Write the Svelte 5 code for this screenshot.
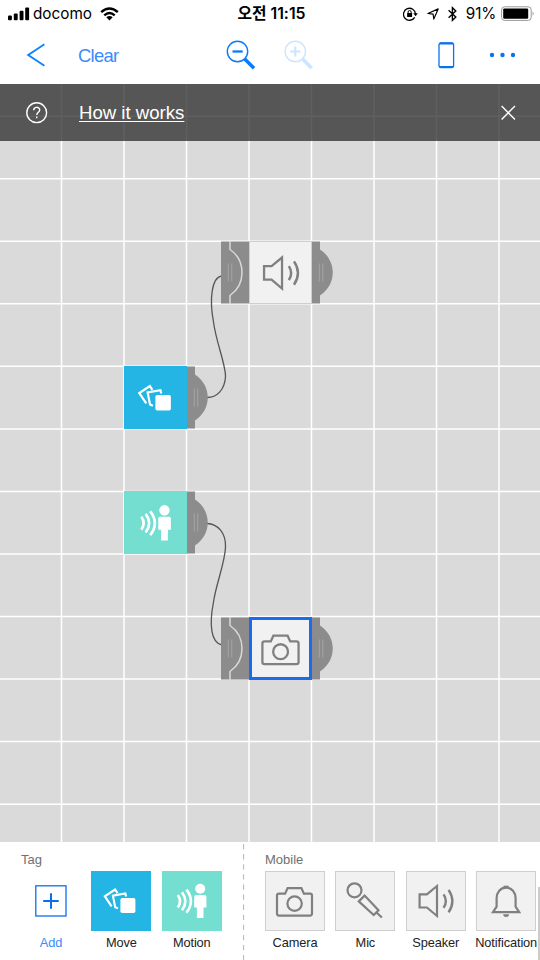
<script>
  const columns = [61.5, 124, 186.5, 249, 311.5, 374, 436.5, 499];
  const rows = [32.2, 94.8, 157.3, 219.8, 282.3, 344.9, 407.4, 470, 532.5, 595.1, 657.6, 720.2];

  const nodes = [
    { icon: 'speaker', kind: 'mobile', x: 221, y: 157, input: true },
    { icon: 'move', kind: 'move', x: 124, y: 282, input: false },
    { icon: 'motion', kind: 'motion', x: 124, y: 407, input: false },
    { icon: 'camera', kind: 'mobile selected', x: 221, y: 533, input: true }
  ];

  const tags = [
    { icon: 'move', kind: 'move', label: 'Move' },
    { icon: 'motion', kind: 'motion', label: 'Motion' }
  ];

  const mobile = [
    { icon: 'camera', label: 'Camera' },
    { icon: 'mic', label: 'Mic' },
    { icon: 'speaker', label: 'Speaker' },
    { icon: 'bell', label: 'Notification' }
  ];
</script>

{#snippet glyph(name)}
  <svg class="glyph" viewBox="0 0 60 60" fill="none" stroke="#808080" stroke-width="2.2">
    {#if name === 'speaker'}
      <path d="M13.6 23.3h7.3L31 15v30L20.9 36.5h-7.3z" />
      <path d="M37.6 23.3q4.5 6.8 0 13.6M42.6 18.8q7.6 11.3 0 22.6" stroke-width="2.4" />
    {:else if name === 'camera'}
      <path d="M14.3 22.6h6.1l2.5-5.5h13.8l2.5 5.5h6.1a2 2 0 0 1 2 2v18a2 2 0 0 1-2 2h-31a2 2 0 0 1-2-2v-18a2 2 0 0 1 2-2z" transform="translate(-.3 0)" />
      <circle cx="29.6" cy="32.6" r="7.2" />
    {:else if name === 'mic'}
      <circle cx="19.5" cy="19.3" r="7" />
      <path d="M23.8 30.4l5.8-5.8 13.9 14.6-4.8 4.8zM41.5 41.5l5.4 5" />
    {:else if name === 'bell'}
      <path d="M17 41.2h26.2l-3.6-5.5v-8.4c0-6-3.8-10.7-9.5-10.7s-9.5 4.7-9.5 10.7v8.4z" />
      <path d="M27.5 15.8h5.2" />
      <path d="M27.2 43.3h5.8a2.9 2.6 0 0 1-5.8 0z" fill="#808080" stroke="none" />
    {:else if name === 'move'}
      <path d="M20.6 35.3l-6.8-10 10.3-6.8 2.4 3.6M27 37.4l-2.8-1.2-2.3-11.6 12.4-2.2.8 3.2" stroke="#fff" stroke-width="2.1" />
      <rect x="29.4" y="27" width="15" height="15" rx="1.8" fill="#fff" stroke="none" />
    {:else if name === 'motion'}
      <path d="M15.8 24q4.6 6.2 0 12.4M20 21.2q6.8 9 0 18M24.4 18.6q9 11.6 0 23.2" stroke="#fff" stroke-width="2.6" />
      <g fill="#fff" stroke="none">
        <circle cx="38.2" cy="17.7" r="5" />
        <path d="M34 24h8.7q1.7 0 1.7 1.7v10.8h-2.9V47h-6.6V36.5h-2.7V25.7q0-1.7 1.8-1.7z" />
      </g>
    {/if}
  </svg>
{/snippet}

<div class="screen">
  <header class="status">
    <div class="carrier">
      <svg width="22" height="14" viewBox="0 0 22 14">
        <rect x="0" y="8.6" width="3.9" height="4.6" rx="1" /><rect x="5.8" y="6.6" width="3.9" height="6.6" rx="1" />
        <rect x="11.6" y="3.7" width="3.9" height="9.5" rx="1" /><rect x="17.2" y="0.4" width="3.9" height="12.8" rx="1" />
      </svg>
      <span>docomo</span>
      <svg class="wifi" width="19" height="14" viewBox="0 0 19 14" fill="none" stroke="#000" stroke-width="2.4">
        <path d="M1.2 5.2q8.3-7.6 16.6 0M4.3 8.4q5.2-4.8 10.4 0" />
        <path d="M6.3 10.3q3.2-2.8 6.4 0L9.5 13.5z" fill="#000" stroke="none" />
      </svg>
    </div>
    <div class="time">오전 11:15</div>
    <div class="indicators">
      <svg width="15" height="14" viewBox="0 0 15 14" fill="none" stroke="#000" stroke-width="1.3">
        <path d="M11.7 10.3A6 6 0 1 1 12.5 7" /><path d="M10.3 6.3h4.5l-2.2 3z" fill="#000" stroke="none" />
        <rect x="4.1" y="6" width="5" height="4" rx=".5" fill="#000" stroke="none" /><path d="M5.1 6V5a1.5 1.5 0 0 1 3 0v1" stroke-width="1" />
      </svg>
      <svg class="location" width="12" height="12" viewBox="0 0 12 12" fill="none" stroke="#000" stroke-width="1.15" stroke-linejoin="round">
        <path d="M11.2.9L6.8 11.1 6.1 6.1.9 5.5z" />
      </svg>
      <svg class="bluetooth" width="9" height="16" viewBox="0 0 9 16" fill="none" stroke="#000" stroke-width="1.4">
        <path d="M.6 4.2l7.2 6.9-3.4 3.2V1.7l3.4 3.2-7.2 6.9" />
      </svg>
      <span>91%</span>
      <svg class="battery" width="34" height="16" viewBox="0 0 34 16">
        <rect x=".6" y=".8" width="29.6" height="13.6" rx="3" fill="#fff" stroke="#999" />
        <rect x="2.2" y="2.4" width="25" height="10.4" rx="1.2" />
        <path d="M31.6 5.5q2.2 2.1 0 4.2z" fill="#999" />
      </svg>
    </div>
  </header>

  <nav class="toolbar">
    <svg class="back" width="20" height="24" viewBox="0 0 20 24" fill="none" stroke="#0a84ff" stroke-width="1.9"><path d="M18.4 1.2L2.2 12l16.2 10.8" /></svg>
    <button class="clear">Clear</button>
    <svg class="zoom-out" width="30" height="30" viewBox="0 0 30 30" fill="none" stroke="#0a7cf8">
      <circle cx="11.5" cy="11.5" r="10.2" stroke-width="1.4" />
      <path d="M6.5 11.5h10.2" stroke-width="2.3" /><path d="M18.5 18.8l9.5 9.4" stroke-width="3.6" />
    </svg>
    <svg class="zoom-in" width="30" height="30" viewBox="0 0 30 30" fill="none" stroke="#cee5fe">
      <circle cx="11.3" cy="11.5" r="10.2" stroke-width="1.4" />
      <path d="M6.2 11.5h10.2M11.3 6.4v10.2" stroke-width="2.2" /><path d="M18.3 18.8l9.5 9.4" stroke-width="3.6" />
    </svg>
    <svg class="phone" width="17" height="27" viewBox="0 0 17 27" fill="none" stroke="#0a72f0">
      <rect x="1" y="1" width="14.6" height="24.6" rx="2" stroke-width="1.3" /><path d="M1.5 1.5h13.6M1.5 25h13.6" stroke-width="2" />
    </svg>
    <svg class="more" width="27" height="6" viewBox="0 0 27 6" fill="#0a72f0">
      <circle cx="3" cy="3" r="2.2" /><circle cx="13.5" cy="3" r="2.2" /><circle cx="24" cy="3" r="2.2" />
    </svg>
  </nav>

  <main class="canvas">
    <svg class="grid" width="540" height="758" viewBox="0 0 540 758" fill="none">
      <g stroke="#fff" stroke-width="1.5">
        {#each columns as x}<path d="M{x} 0V758" />{/each}
        {#each rows as y}<path d="M0 {y}H540" />{/each}
      </g>
      <g stroke="#555" stroke-width="1.3">
        <path d="M222 192C212 193 209 214 213.5 238C216 258 226 281 225.5 293C224.5 306 217 313.5 207 313.5" />
        <path d="M207 439.5C218 440 226 449 225.5 463C225 479 216 500 213.5 518C209 541 211 559 222 561" />
      </g>
    </svg>

    {#each nodes as node}
      <div class="node" style="left: {node.x}px; top: {node.y}px">
        {#if node.input}
          <svg width="28" height="63" viewBox="0 0 28 63">
            <path d="M0 .5h28v62H0z" fill="#8c8c8c" />
            <path d="M9 0v8.5c16 11 16 35 0 46V63" fill="none" stroke="#d9d9d9" stroke-width="1.5" />
            <path d="M7.3 22.5v18M10.8 22.5v18" stroke="#a5a5a5" />
          </svg>
        {/if}
        <div class="face {node.kind}">{@render glyph(node.icon)}</div>
        <svg width="21" height="63" viewBox="0 0 21 63">
          <path d="M0 .5h8v8c17 11 17 35 0 46v8H0z" fill="#8c8c8c" />
          <path d="M7.3 22.5v18M10.8 22.5v18" stroke="#a5a5a5" />
        </svg>
      </div>
    {/each}

    <div class="banner">
      <svg width="22" height="22" viewBox="0 0 22 22" fill="none" stroke="#fff" stroke-width="1.4">
        <circle cx="10.7" cy="10.7" r="9.9" />
        <path d="M7.7 8.3c0-4 6-3.8 6-.4 0 2.3-3 2.6-3 5.2M10.7 14.4v1.8" />
      </svg>
      <a href="#how">How it works</a>
      <svg class="close" width="16" height="16" viewBox="0 0 16 16" stroke="#fff" stroke-width="1.4"><path d="M1.6 1l13.4 13.4M15 1L1.6 14.4" /></svg>
    </div>
  </main>

  <footer class="palette">
    <section class="tags">
      <h2>Tag</h2>
      <div class="items">
        <div class="item add">
          <div class="slot">
            <svg width="32" height="32" viewBox="0 0 32 32" fill="none" stroke="#0a6fee">
              <rect x=".8" y=".8" width="30.2" height="30.2" stroke-width="1.3" /><path d="M8.2 16h15.5M16 8.2v15.5" stroke-width="2" />
            </svg>
          </div>
          <span>Add</span>
        </div>
        {#each tags as tag}
          <div class="item"><div class="slot {tag.kind}">{@render glyph(tag.icon)}</div><span>{tag.label}</span></div>
        {/each}
      </div>
    </section>
    <svg class="divider" width="2" height="118" viewBox="0 0 2 118"><path d="M.5 2V118" stroke="#bbb" stroke-width="1.2" stroke-dasharray="5.3 4.8" /></svg>
    <section class="devices">
      <h2>Mobile</h2>
      <div class="items">
        {#each mobile as item}
          <div class="item"><div class="slot mobile">{@render glyph(item.icon)}</div><span>{item.label}</span></div>
        {/each}
      </div>
    </section>
    <div class="scrollbar"></div>
  </footer>
</div>

<style>
  .screen {
    width: 540px;
    height: 960px;
    display: flex;
    flex-direction: column;
    overflow: hidden;
    background: #fff;
    font-family: "Liberation Sans", Arial, sans-serif;
  }
  svg { display: block; flex: none; }
  .status {
    height: 28px;
    flex: none;
    display: grid;
    grid-template-columns: 1fr auto 1fr;
    align-items: center;
    font: 15.3px/28px Inter, "Noto Sans CJK KR", sans-serif;
    color: #000;
    padding: 0 5px 0 8px;
  }
  .carrier, .indicators { display: flex; align-items: center; }
  .carrier span { margin-left: 3px; }
  .wifi { margin-left: 8px; }
  .time { font-weight: 600; font-size: 15.8px; }
  .indicators { justify-content: flex-end; }
  .location { margin-left: 9px; }
  .bluetooth { margin: 0 9px; }
  .battery { margin-left: 5px; }
  .indicators span { letter-spacing: -.2px; }
  .toolbar {
    height: 56px;
    flex: none;
    display: flex;
    align-items: center;
    padding: 0 24px 2px 26px;
    box-sizing: border-box;
  }
  .clear {
    margin-left: 32px;
    padding: 1px 0 0;
    border: 0;
    background: none;
    color: #3a8bfb;
    font: 18.4px "Liberation Sans", Arial, sans-serif;
    letter-spacing: -.7px;
    width: 42px;
    text-align: left;
  }
  .zoom-out { margin-left: 106px; }
  .zoom-in { margin-left: 28px; }
  .phone { margin-left: 124px; }
  .more { margin-left: auto; }
  .canvas {
    position: relative;
    height: 758px;
    flex: none;
    background: #dadada;
  }
  .node { position: absolute; display: flex; }
  .face, .slot {
    box-sizing: border-box;
    display: flex;
    align-items: center;
    justify-content: center;
  }
  .face { width: 63px; height: 63px; }
  .face .glyph { width: 62px; height: 62px; }
  .glyph { width: 60px; height: 60px; }
  .mobile { background: #f1f1f1; border: 1.5px solid #cfcfcf; }
  .selected { border: 3px solid #1b6bea; }
  .move { background: #24b5e5; }
  .motion { background: #74dfd0; }
  .banner {
    position: absolute;
    inset: 0 0 auto;
    height: 57px;
    box-sizing: border-box;
    padding: 0 24px 0 26px;
    display: flex;
    align-items: center;
    background: rgba(41, 41, 41, .75);
  }
  .banner a {
    margin-left: 31px;
    color: #fff;
    font-size: 18.6px;
    text-decoration-thickness: 1px;
    text-underline-offset: 2px;
  }
  .close { margin-left: auto; }
  .palette {
    position: relative;
    flex: 1;
    display: flex;
  }
  h2 {
    margin: 0;
    height: 29px;
    padding-top: 10px;
    box-sizing: border-box;
    font-size: 13px;
    line-height: 15px;
    font-weight: 400;
    color: #707070;
  }
  .tags { width: 243px; box-sizing: border-box; padding-left: 21px; }
  .devices { padding-left: 20px; }
  .items { display: flex; gap: 10.4px; }
  .item { width: 60px; display: flex; flex-direction: column; align-items: center; }
  .slot { width: 60px; height: 60px; }
  .item span {
    margin-top: 4px;
    font-size: 12.8px;
    line-height: 15px;
    letter-spacing: -.12px;
    white-space: nowrap;
    color: #222;
  }
  .item.add span { color: #3a8bfb; }
  .scrollbar {
    position: absolute;
    right: 0;
    top: 45px;
    bottom: 0;
    width: 2px;
    background: #ccc;
  }
</style>
